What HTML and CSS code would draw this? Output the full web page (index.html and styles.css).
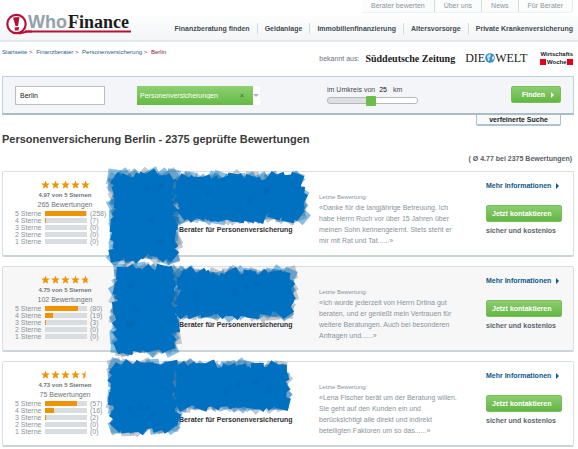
FILE: index.html
```html
<!DOCTYPE html>
<html lang="de">
<head>
    <meta charset="UTF-8">
    <title>Personenversicherung Berlin - WhoFinance</title>
    <link rel="stylesheet" href="styles.css">
</head>
<body>
    <!-- Kopfbereich -->
    <header id="header">
        <a class="logo" href="#" aria-label="WhoFinance">
            <svg width="126" height="25" viewBox="0 0 126 25">
                <path d="M19 18.500H125" stroke="#b5123a" stroke-width="2"/>
                <circle cx="10.500" cy="11" r="9.200" fill="#fff" stroke="#b5123a" stroke-width="2.200"/>
                <path d="M13 20.500Q18 19.500 21 18.500H26" fill="none" stroke="#b5123a" stroke-width="2"/>
                <path d="M7 4.500L13.500 4L12 13H9.500Z" fill="#b5123a"/>
                <path d="M8.500 14.500L13 14L12.500 17.500H9Z" fill="#b5123a"/>
                <text x="22" y="15" class="logo-who">Who</text>
                <text x="62" y="15" class="logo-finance">Finance</text>
            </svg>
        </a>
        <div class="header-nav">
            <nav class="top-links">
                <a href="#">Berater bewerten</a>
                <a href="#">Über uns</a>
                <a href="#">News</a>
                <a href="#">Für Berater</a>
            </nav>
            <nav class="main-links">
                <a href="#">Finanzberatung finden</a>
                <a href="#">Geldanlage</a>
                <a href="#">Immobilienfinanzierung</a>
                <a href="#">Altersvorsorge</a>
                <a href="#">Private Krankenversicherung</a>
            </nav>
        </div>
    </header>

    <!-- Brotkrumen und Presse -->
    <div class="sub-header">
        <div class="breadcrumb">
            <a href="#">Startseite</a> &gt;
            <a href="#">Finanzberater</a> &gt;
            <a href="#">Personenversicherung</a> &gt;
            <span>Berlin</span>
        </div>
        <div class="press">
            <span class="press-label">bekannt aus:</span>
            <span class="press-sz">Süddeutsche Zeitung</span>
            <span class="press-welt">DIE<svg width="10" height="10" viewBox="0 0 10 10"><circle cx="5" cy="5" r="4.800" fill="#3f8fc4"/><path d="M2 3L5 1L6 3L4 5L5 7L3 8Z M7 4L9 3L9 6L7 7Z" fill="#cfe5f3"/></svg>WELT</span>
            <span class="press-wiwo">Wirtschafts<span><i></i>Woche<i></i></span></span>
        </div>
    </div>

    <!-- Suche -->
    <form class="search">
        <div class="search-box">
            <input class="city" type="text" value="Berlin" aria-label="Ort">
            <div class="topic">
                <select aria-label="Thema">
                    <option>Personenversicherungen</option>
                </select>
                <button type="button" aria-label="Thema entfernen">×</button>
            </div>
            <div class="radius">
                <label for="radius">im Umkreis von <b>25</b> km</label>
                <input id="radius" type="range" min="0" max="50" value="24">
            </div>
            <button class="green-btn find" type="submit">Finden <i class="arrow"></i></button>
        </div>
        <button class="refine" type="button">verfeinerte Suche</button>
    </form>

    <h1>Personenversicherung Berlin - 2375 geprüfte Bewertungen</h1>
    <p class="average">( Ø 4.77 bei 2375 Bewertungen)</p>

    <!-- Beraterliste -->
    <main class="results">
        <article class="card">
            <div class="rating">
                <div class="stars" data-stars="5"></div>
                <b>4.97 von 5 Sternen</b>
                <span>265 Bewertungen</span>
                <table>
                    <tr><th>5 Sterne</th><td><div class="bar"><div style="width: 98%"></div></div></td><td>(258)</td></tr>
                    <tr><th>4 Sterne</th><td><div class="bar"><div style="width: 3%"></div></div></td><td>(7)</td></tr>
                    <tr><th>3 Sterne</th><td><div class="bar"></div></td><td>(0)</td></tr>
                    <tr><th>2 Sterne</th><td><div class="bar"></div></td><td>(0)</td></tr>
                    <tr><th>1 Sterne</th><td><div class="bar"></div></td><td>(0)</td></tr>
                </table>
            </div>
            <h2>Berater für Personenversicherung</h2>
            <div class="review">
                <small>Letzte Bewertung:</small>
                <p>«Danke für die langjährige Betreuung. Ich<br>habe Herrn Ruch vor über 15 Jahren über<br>meinen Sohn kennengelernt. Stets steht er<br>mir mit Rat und Tat......»</p>
            </div>
            <div class="actions">
                <a href="#">Mehr Informationen <i class="arrow"></i></a>
                <button class="green-btn" type="button">Jetzt kontaktieren</button>
                <span>sicher und kostenlos</span>
            </div>
            <svg class="scribble" data-areas="107 -1 69 91;172 2 131 48"></svg>
        </article>

        <article class="card">
            <div class="rating">
                <div class="stars" data-stars="4.75"></div>
                <b>4.75 von 5 Sternen</b>
                <span>102 Bewertungen</span>
                <table>
                    <tr><th>5 Sterne</th><td><div class="bar"><div style="width: 78%"></div></div></td><td>(80)</td></tr>
                    <tr><th>4 Sterne</th><td><div class="bar"><div style="width: 19%"></div></div></td><td>(19)</td></tr>
                    <tr><th>3 Sterne</th><td><div class="bar"><div style="width: 3%"></div></div></td><td>(3)</td></tr>
                    <tr><th>2 Sterne</th><td><div class="bar"></div></td><td>(0)</td></tr>
                    <tr><th>1 Sterne</th><td><div class="bar"></div></td><td>(0)</td></tr>
                </table>
            </div>
            <h2>Berater für Personenversicherung</h2>
            <div class="review">
                <small>Letzte Bewertung:</small>
                <p>«Ich wurde jederzeit von Herrn Drtina gut<br>beraten, und er genießt mein Vertrauen für<br>weitere Beratungen. Auch bei besonderen<br>Anfragen und......»</p>
            </div>
            <div class="actions">
                <a href="#">Mehr Informationen <i class="arrow"></i></a>
                <button class="green-btn" type="button">Jetzt kontaktieren</button>
                <span>sicher und kostenlos</span>
            </div>
            <svg class="scribble" data-areas="109 -2 67 89;172 2 120 49"></svg>
        </article>

        <article class="card">
            <div class="rating">
                <div class="stars" data-stars="4.5"></div>
                <b>4.73 von 5 Sternen</b>
                <span>75 Bewertungen</span>
                <table>
                    <tr><th>5 Sterne</th><td><div class="bar"><div style="width: 76%"></div></div></td><td>(57)</td></tr>
                    <tr><th>4 Sterne</th><td><div class="bar"><div style="width: 21%"></div></div></td><td>(16)</td></tr>
                    <tr><th>3 Sterne</th><td><div class="bar"><div style="width: 3%"></div></div></td><td>(2)</td></tr>
                    <tr><th>2 Sterne</th><td><div class="bar"></div></td><td>(0)</td></tr>
                    <tr><th>1 Sterne</th><td><div class="bar"></div></td><td>(0)</td></tr>
                </table>
            </div>
            <h2>Berater für Personenversicherung</h2>
            <div class="review">
                <small>Letzte Bewertung:</small>
                <p>«Lena Fischer berät um der Beratung willen.<br>Sie geht auf den Kunden ein und<br>berücksichtigt alle direkt und indirekt<br>beteiligten Faktoren um so das......»</p>
            </div>
            <div class="actions">
                <a href="#">Mehr Informationen <i class="arrow"></i></a>
                <button class="green-btn" type="button">Jetzt kontaktieren</button>
                <span>sicher und kostenlos</span>
            </div>
            <svg class="scribble" data-areas="106 -1 71 73;172 0 114 49"></svg>
        </article>
    </main>

    <script src="script.js"></script>
</body>
</html>
```

FILE: styles.css
```css
* {
    box-sizing: border-box;
}

body {
    margin: 0;
    font-family: "Liberation Sans", Arial, sans-serif;
    font-size: 7px;
    line-height: 11px;
    color: #444b52;
    background: #fff;
    overflow-x: hidden;
}

a {
    color: inherit;
    text-decoration: none;
}

button,
input,
select {
    font-family: inherit;
    font-size: 7px;
    margin: 0;
}

/* Kopfbereich */
#header {
    display: flex;
    justify-content: space-between;
    height: 42px;
    padding: 0 5px 0 6px;
    background: linear-gradient(#fff 30%, #f3f5f7);
    border-bottom: 2px solid #e3e8eb;
}

.logo {
    padding-top: 13px;
}

.logo svg {
    display: block;
}

.logo-who {
    font: bold 18px "Liberation Sans", Arial, sans-serif;
    fill: #93a1ab;
}

.logo-finance {
    font: bold 18px "Liberation Serif", serif;
    fill: #1c1c1c;
}

.header-nav {
    display: flex;
    flex-direction: column;
    align-items: flex-end;
    gap: 10px;
}

.top-links {
    display: flex;
    height: 13px;
    background: #fbfcfc;
    border-right: 1px solid #e6eaec;
    border-bottom: 1px solid #eef1f2;
    border-radius: 0 0 3px 0;
    color: #8d969d;
}

.top-links a {
    padding: 0 9px;
}

.main-links {
    display: flex;
    font-weight: bold;
}

.main-links a {
    padding: 0 7px;
}

.main-links a:last-child {
    padding-right: 0;
}

.header-nav a + a {
    border-left: 1px solid #d5dade;
}

/* Brotkrumen und Presse */
.sub-header {
    display: flex;
    justify-content: space-between;
    padding: 5px 5px 0 2px;
    height: 34px;
}

.breadcrumb {
    font-size: 6px;
    color: #9b2c48;
}

.breadcrumb a {
    color: #1f6088;
}

.breadcrumb a + a {
    margin-left: 2px;
}

.breadcrumb span {
    margin-left: 2px;
    color: #8c1532;
}

.press {
    display: flex;
    align-items: center;
    height: 22px;
    color: #1a1a1a;
}

.press-label {
    margin-right: 6px;
    color: #6b7278;
}

.press-sz {
    margin-right: 10px;
    font: bold 10px "Liberation Serif", serif;
}

.press-welt {
    display: flex;
    align-items: center;
    margin-right: 13px;
    font: 12px "Liberation Serif", serif;
}

.press-wiwo {
    font-size: 6px;
    font-weight: bold;
    line-height: 8px;
}

.press-wiwo span {
    display: flex;
    align-items: center;
    justify-content: space-between;
}

.press-wiwo i {
    width: 6px;
    height: 6px;
    background: #e2001a;
}

/* Suche */
.search {
    display: flex;
    flex-direction: column;
    align-items: flex-end;
    padding: 0 4px 0 2px;
}

.search-box {
    display: flex;
    align-items: flex-start;
    width: 100%;
    height: 39px;
    padding: 9px 12px;
    background: #f4f5f8;
    border: 1px solid #b9d5e0;
    border-bottom: 2px solid #a9bcc8;
}

.city {
    width: 90px;
    height: 19px;
    padding: 0 4px;
    border: 1px solid #b9bec3;
    background: #fff;
    color: #222;
}

.topic {
    position: relative;
    margin-left: 32px;
}

.topic select {
    display: block;
    appearance: none;
    width: 123px;
    height: 19px;
    padding: 0 3px;
    border: 0;
    border-radius: 0;
    background:
        linear-gradient(#8fd072, #64b944) left / 116px 19px no-repeat,
        #fff;
    color: #fff;
}

.topic::after {
    content: "";
    position: absolute;
    right: 1px;
    top: 8px;
    border: 3px solid transparent;
    border-top-color: #b0b4b8;
}

.topic button {
    position: absolute;
    right: 16px;
    top: 4px;
    padding: 0;
    border: 0;
    background: none;
    line-height: 11px;
    color: #2f6b1d;
}

.radius {
    display: flex;
    flex-direction: column;
    gap: 1px;
    margin-left: 67px;
}

.radius label {
    line-height: 8px;
    white-space: pre;
}

.radius b {
    margin: 0 4px 0 2px;
    font-weight: normal;
    color: #111;
}

.radius input {
    appearance: none;
    width: 91px;
    height: 11px;
    background: none;
}

.radius input::-webkit-slider-runnable-track {
    height: 7px;
    border: 1px solid #b4b8bc;
    border-radius: 3px;
    background: linear-gradient(to right, #dddfe1 48%, #fff 48%);
}

.radius input::-webkit-slider-thumb {
    appearance: none;
    width: 10px;
    height: 10px;
    margin-top: -2px;
    border-radius: 1px;
    background: #6abf4b;
}

.green-btn {
    display: flex;
    align-items: center;
    height: 17px;
    padding: 0 5px;
    border: 1px solid #78be5c;
    border-radius: 2px;
    background: linear-gradient(#8ccd70, #62b743);
    font-weight: bold;
    color: #fff;
}

.find {
    gap: 6px;
    margin-left: auto;
    padding: 0 6px 0 10px;
}

.arrow {
    display: inline-block;
    border-left: 3px solid currentColor;
    border-top: 3px solid transparent;
    border-bottom: 3px solid transparent;
}

.refine {
    width: 85px;
    height: 11px;
    margin-right: 13px;
    padding: 0;
    border: 1px solid #a9c3d0;
    border-top: 0;
    border-bottom-width: 2px;
    border-radius: 0 0 2px 2px;
    background: #f8f9fb;
    font-weight: bold;
    line-height: 8px;
    color: #222;
}

h1 {
    margin: 6px 2px 0;
    font-size: 11px;
    line-height: 14px;
    color: #3b3b3b;
}

.average {
    margin: 7px 6px;
    font-weight: bold;
    text-align: right;
    color: #5b6066;
}

/* Beraterliste */
.results {
    display: flex;
    flex-direction: column;
    gap: 9px;
    padding: 0 4px 0 2px;
}

.card {
    position: relative;
    display: flex;
    height: 86px;
    background: #fff;
    border: 1px solid #d9dfe2;
    border-bottom: 2px solid #ccd4d8;
    border-radius: 2px;
}

.card:nth-child(even) {
    background: #f7f7f7;
}

.rating {
    display: flex;
    flex-direction: column;
    align-items: center;
    width: 124px;
    padding-top: 8px;
    line-height: 9px;
    font-size: 6px;
    color: #6b747b;
}

.rating > span {
    font-size: 7px;
    line-height: 10px;
}

.stars {
    display: flex;
    gap: 1px;
    height: 11px;
}

.rating table {
    align-self: flex-start;
    margin-left: 12px;
    border-collapse: collapse;
}

.rating th,
.rating td {
    height: 7px;
    padding: 0 3px 0 0;
    font-size: 7px;
    font-weight: normal;
    line-height: 7px;
    text-align: left;
    white-space: nowrap;
    color: #8a939a;
}

.rating th {
    width: 30px;
}

.bar {
    width: 42px;
    height: 5px;
    background: #d9dce1;
}

.bar div {
    height: 100%;
    background: #ef9307;
}

.card h2 {
    width: 192px;
    margin: 52px 0 0;
    padding-left: 52px;
    font-size: 7px;
    line-height: 11px;
    white-space: nowrap;
    color: #2e2e2e;
}

.review {
    flex: 1;
    padding-top: 20px;
    white-space: nowrap;
    color: #89939b;
}

.review small {
    display: block;
    font-size: 6px;
    line-height: 10px;
}

.review p {
    margin: 0;
}

.actions {
    display: flex;
    flex-direction: column;
    align-items: flex-start;
    width: 87px;
    padding-top: 8px;
    font-weight: bold;
    white-space: nowrap;
    color: #5b646b;
}

.actions a {
    display: flex;
    align-items: center;
    gap: 5px;
    margin-bottom: 14px;
    color: #10588a;
}

.actions button {
    width: 76px;
    margin-bottom: 3px;
}

/* Übermalte Bereiche */
.scribble {
    position: absolute;
    top: 0;
    left: 0;
    width: 100%;
    height: 100%;
    overflow: visible;
    pointer-events: none;
}
```

FILE: script.js
```js
const SVG_NS = "http://www.w3.org/2000/svg";

// Zufall mit festem Startwert, damit die Seite immer gleich aussieht
let seed = 7;
function random() {
    seed = (seed * 16807) % 2147483647;
    return seed / 2147483647;
}

// Sterne zeichnen, der letzte eventuell nur teilweise
document.querySelectorAll(".stars").forEach((box) => {
    const value = parseFloat(box.dataset.stars);
    for (let i = 0; i < 5; i++) {
        const hidden = Math.max(0, i + 1 - value) * 100;
        const svg = document.createElementNS(SVG_NS, "svg");
        svg.setAttribute("width", 9);
        svg.setAttribute("height", 9);
        svg.setAttribute("viewBox", "0 0 10 10");
        svg.innerHTML = `<path d="M5 0.500L6.300 3.800L9.800 4L7.100 6.200L8 9.700L5 7.700L2 9.700L2.900 6.200L0.200 4L3.700 3.800Z" fill="#ef9307" style="clip-path: inset(0 ${hidden}% 0 0)"/>`;
        box.appendChild(svg);
    }
});

function addSquare(svg, x, y, size, fill) {
    const rect = document.createElementNS(SVG_NS, "rect");
    rect.setAttribute("x", x - size / 2);
    rect.setAttribute("y", y - size / 2);
    rect.setAttribute("width", size);
    rect.setAttribute("height", size);
    rect.setAttribute("fill", fill);
    rect.setAttribute("transform", `rotate(${random() * 90} ${x} ${y})`);
    svg.appendChild(rect);
}

// Gedrehte Quadrate über die Fläche verteilen, graue zuerst, dann blaue
function scribble(svg, x, y, w, h) {
    const layers = [
        { fill: "rgba(125, 138, 150, 0.45)", inset: 7, step: 9 },
        { fill: "rgba(0, 112, 192, 0.45)", inset: 7, step: 10 },
        { fill: "#0070c0", inset: 9, step: 8 }
    ];
    layers.forEach(({ fill, inset, step }) => {
        const cols = Math.round((w - 2 * inset) / step);
        const rows = Math.round((h - 2 * inset) / step);
        for (let i = 0; i <= cols; i++) {
            for (let j = 0; j <= rows; j++) {
                const px = x + inset + i * (w - 2 * inset) / cols;
                const py = y + inset + j * (h - 2 * inset) / rows;
                addSquare(svg, px + random() * 6 - 3, py + random() * 6 - 3, 13, fill);
            }
        }
    });
    // Innenfläche schließen
    for (let px = x + 12; px <= x + w - 12; px += 5) {
        for (let py = y + 12; py <= y + h - 12; py += 5) {
            addSquare(svg, px, py, 11, "#0070c0");
        }
    }
    for (let i = 0; i < 4; i++) {
        addSquare(svg, x + 15 + random() * (w - 30), y + 15 + random() * (h - 30), 5, "rgba(0, 50, 110, 0.07)");
    }
}

document.querySelectorAll(".scribble").forEach((svg) => {
    svg.dataset.areas.split(";").forEach((area) => {
        scribble(svg, ...area.split(" ").map(Number));
    });
});
```
